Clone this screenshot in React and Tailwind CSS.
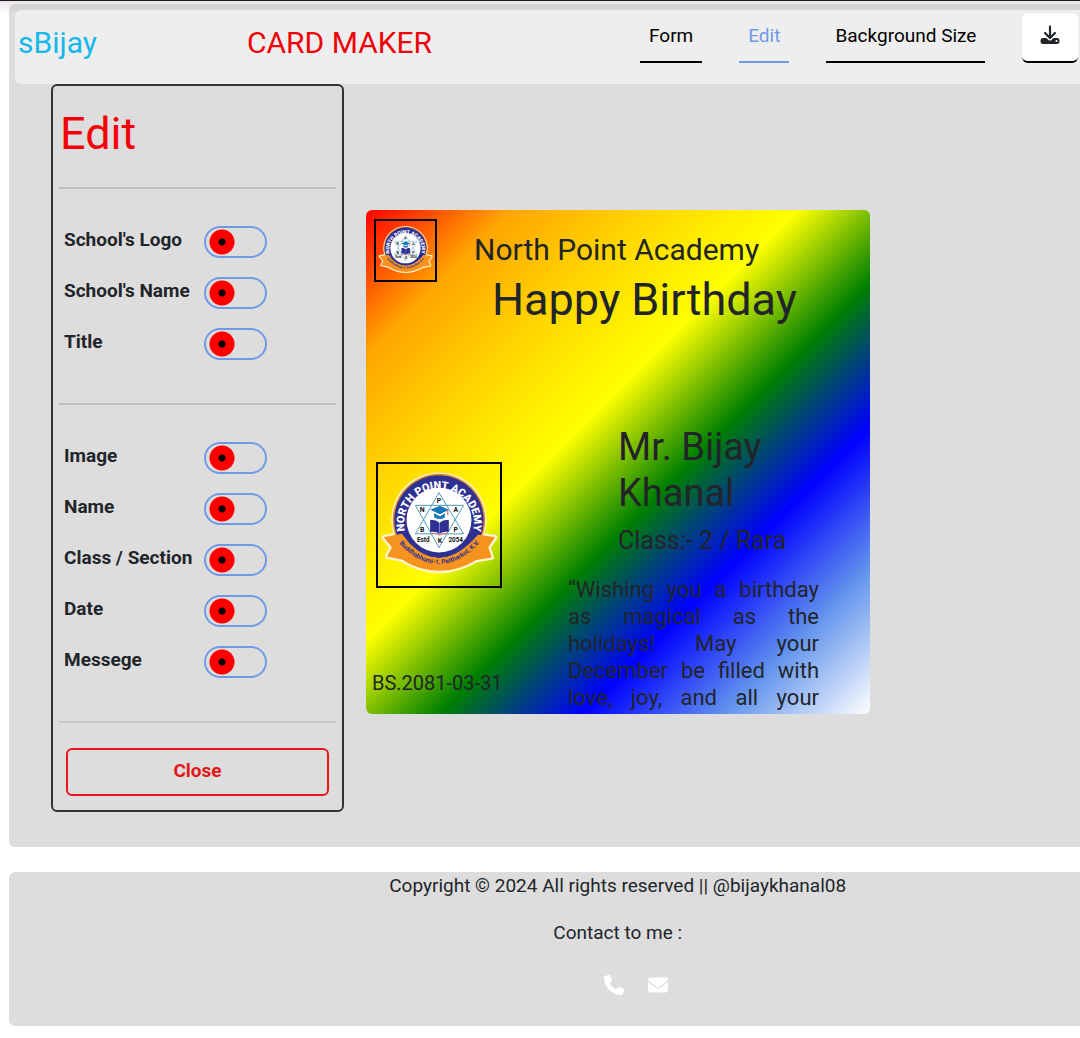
import { FaPhone, FaEnvelope } from "react-icons/fa6";

function SchoolLogo({ className, id }) {
  return (
    <svg viewBox="0 0 120 120" className={className} role="img" aria-label="North Point Academy logo">
      <defs>
        <path id={id + "-top"} d="M25.500 67A35.500 35.500 0 1 1 94.500 67" />
        <path id={id + "-bottom"} d="M17 76Q60 124 104 75" />
      </defs>
      <circle cx="60" cy="55" r="48.500" fill="#fff3c8" />
      <path
        d="M4 72.500L22 69L30.500 79.300Q60 108 91.500 78.600L100 70L117 72.500L110 82.700L113.500 93L98 95.600Q60 118 22 95L7.400 92L12 82.700Z"
        fill="#fff3c8"
        stroke="#fff3c8"
        strokeWidth="5"
        strokeLinejoin="round"
      />
      <circle cx="60" cy="55" r="47" fill="#e08a2c" />
      <circle cx="60" cy="55" r="45.500" fill="#2e3192" />
      <path d="M22 69L30.500 80Q60 108 91.500 79L100 70L110 84L98 97H22L10 84Z" fill="#fff" />
      <circle cx="60" cy="55" r="33" fill="#fff" />
      <text fill="#fff" fontFamily="Roboto, sans-serif" fontWeight="900" fontSize="11" textAnchor="middle">
        <textPath href={"#" + id + "-top"} startOffset="50%">NORTH POINT ACADEMY</textPath>
      </text>
      <path d="M60 27L85 69H36ZM60 83L36 40H85Z" fill="none" stroke="#3a8fb0" strokeWidth="0.900" />
      <path d="M51 44.500L61 40.500L70 44.500L61 49ZM55 48L61 51L66 48V52Q61 56 55 52Z" fill="#1878b8" />
      <path d="M69 45V50" stroke="#d33" strokeWidth="1" />
      <path d="M51 55Q57 54 60.500 58Q64 54 70 55V67Q64 66 60.500 69Q57 66 51 67Z" fill="#2e3192" />
      <path d="M52 68.500Q57 67.500 60.500 70.500Q64 67.500 69 68.500" fill="none" stroke="#e66" strokeWidth="1" />
      <path d="M60.500 58V68" stroke="#9fb4e8" strokeWidth="0.700" />
      <g fill="#111" fontFamily="Roboto, sans-serif" fontWeight="700" fontSize="7" textAnchor="middle">
        <text x="60" y="38">P</text>
        <text x="43" y="47">N</text>
        <text x="77" y="47">A</text>
        <text x="43" y="67">B</text>
        <text x="77" y="67">P</text>
        <text x="61" y="78">K</text>
      </g>
      <g fill="#111" fontFamily="Roboto, sans-serif" fontWeight="700" fontSize="6.500" textAnchor="middle">
        <text x="44" y="77">Estd</text>
        <text x="77" y="77">2054</text>
      </g>
      <path
        d="M4 72.500L22 69L30.500 79.300Q60 108 91.500 78.600L100 70L117 72.500L110 82.700L113.500 93L98 95.600Q60 118 22 95L7.400 92L12 82.700Z"
        fill="#f6921e"
      />
      <text fill="#2e3192" fontFamily="Roboto, sans-serif" fontWeight="700" fontSize="6.500" textAnchor="middle">
        <textPath href={"#" + id + "-bottom"} startOffset="50%">Buddhabhumi-1, Pattharkot, K.V.</textPath>
      </text>
    </svg>
  );
}

function Toggle({ label }) {
  const id = label.toLowerCase().replace(/[^a-z]+/g, "-");
  return (
    <div className="flex h-8 items-center">
      <label htmlFor={id} className="w-[140px] pb-1 font-bold">{label}</label>
      <input
        id={id}
        type="checkbox"
        role="switch"
        className="h-8 w-[63px] shrink-0 appearance-none rounded-full border-2 border-[#6f9be6] bg-[radial-gradient(circle_at_16px_50%,black_3px,red_4px,red_12px,transparent_13px)]"
      />
    </div>
  );
}

const groups = [
  ["School's Logo", "School's Name", "Title"],
  ["Image", "Name", "Class / Section", "Date", "Messege"],
];

export default function App() {
  return (
    <div className="overflow-hidden border-t border-[#201820] bg-[linear-gradient(#e9e4e9,white_12px)] pb-3 font-[Roboto,sans-serif] text-[19px] leading-7 text-[#212529]">
      <div className="ml-[9px] w-[calc(113%-3px)]">
        <main className="mt-[3px] rounded-md bg-[#ddd] bg-[linear-gradient(#d0d0d0,#ddd_12px)] pt-1.5 pb-[35px] pl-1.5">
          <header className="flex h-[74px] items-start rounded-md bg-[#eee]">
            <a href="#home" className="ml-[3px] w-[229px] pt-[15px] text-[30px] leading-9 text-[#16b8ec]">sBijay</a>
            <h1 className="w-[393px] pt-[15px] text-[30px] leading-9 text-[#f00008]">CARD MAKER</h1>
            <nav className="flex gap-[37px] pt-[3px] text-black">
              <button className="h-[50px] border-b-2 border-black px-[9px] pb-0.5">Form</button>
              <button className="h-[50px] border-b-2 border-[#6f9be6] px-[9px] pb-0.5 text-[#6f9be6]">Edit</button>
              <button className="h-[50px] border-b-2 border-black px-[9px] pb-0.5">Background Size</button>
              <button aria-label="Download" className="flex h-[50px] w-14 items-center justify-center rounded-md border-b-2 border-black bg-white pb-1">
                <svg viewBox="0 0 20 20" className="size-5" fill="#212529">
                  <path d="M10 1.500V12M5 8L10 13L15 8" fill="none" stroke="#212529" strokeWidth="2.200" strokeLinecap="round" strokeLinejoin="round" />
                  <path d="M3 13H6.500L8.500 15Q10 16.200 11.500 15L13.500 13H17A2.500 3 0 0 1 17 19H3A2.500 3 0 0 1 3 13Z" />
                  <circle cx="16.500" cy="16" r="1" fill="#fff" />
                </svg>
              </button>
            </nav>
          </header>
          <div className="flex items-center">
            <aside className="ml-9 w-[293px] shrink-0 rounded-md border-2 border-[#333] px-1.5">
              <h2 className="pt-5 pb-[25px] pl-px text-[45px] leading-[56px] text-[#f80008]">Edit</h2>
              {groups.map((g) => (
                <section key={g[0]} className="flex flex-col gap-[19px] border-t-2 border-[#bfc1c1] px-[5px] pt-[37px] pb-[43px]">
                  {g.map((l) => <Toggle key={l} label={l} />)}
                </section>
              ))}
              <div className="border-t-2 border-[#c8c8c8] px-[7px] pt-[25px] pb-3.5">
                <button className="h-12 w-full rounded-md border-2 border-[#e81818] pb-0.5 font-bold text-[#e01818]">Close</button>
              </div>
            </aside>
            <article className="mt-7 ml-[22px] h-[504px] w-[504px] shrink-0 overflow-hidden rounded-md bg-[linear-gradient(135deg,red,orange,gold,yellow,green,blue,cornflowerblue,white)] pt-[9px]">
              <div className="flex">
                <SchoolLogo id="small" className="ml-2 h-[63px] w-[63px] border-2 border-black p-0.5" />
                <div className="ml-[37px]">
                  <h3 className="pt-[13px] text-[30px] leading-9">North Point Academy</h3>
                  <h2 className="pt-[5px] pl-[18px] text-[45px] leading-[54px]">Happy Birthday</h2>
                </div>
              </div>
              <div className="mt-[97px] flex">
                <div className="w-[202px] shrink-0">
                  <SchoolLogo id="large" className="mt-[38px] ml-2.5 h-[126px] w-[126px] border-2 border-black p-0.5" />
                  <p className="mt-[81px] ml-1.5 text-[20px]">BS.2081-03-31</p>
                </div>
                <div className="w-[251px]">
                  <h3 className="pl-[50px] text-[38px] leading-[46px]">Mr. Bijay Khanal</h3>
                  <p className="pt-[9px] pl-[50px] text-[25px] leading-8">Class:- 2 / Rara</p>
                  <p className="mt-[19px] text-justify text-[22px] leading-[27px] [text-align-last:justify]">
                    “Wishing you a birthday as magical as the holidays! May your December be filled with love, joy, and all your
                  </p>
                </div>
              </div>
            </article>
          </div>
        </main>
        <footer className="mt-[25px] flex h-[154px] flex-col items-center rounded-md bg-[#ddd]">
          <p>Copyright © 2024 All rights reserved || @bijaykhanal08</p>
          <p className="mt-[19px]">Contact to me :</p>
          <div className="mt-7 ml-[37px] flex gap-6 text-[20px] text-white">
            <a href="#phone" aria-label="Phone"><FaPhone /></a>
            <a href="#email" aria-label="Email"><FaEnvelope /></a>
          </div>
        </footer>
      </div>
    </div>
  );
}
